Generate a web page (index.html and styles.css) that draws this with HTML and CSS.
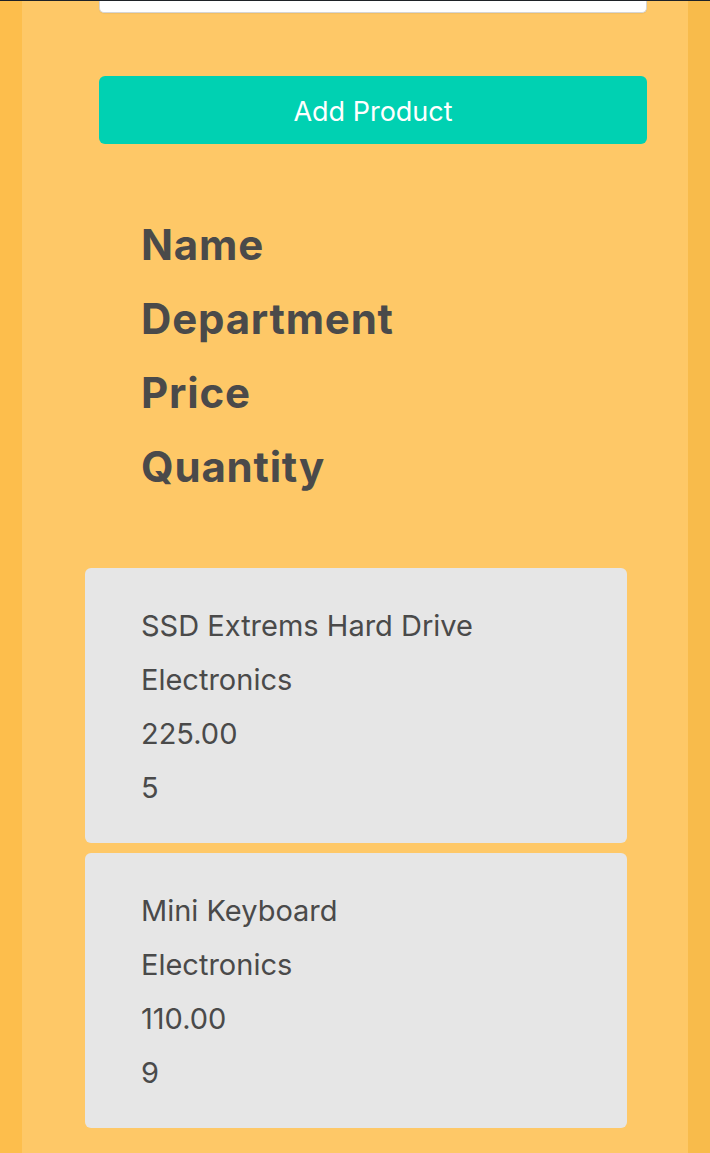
FILE: index.html
```html
<!DOCTYPE html>
<html>
<head>
<meta charset="utf-8">
<link rel="stylesheet" href="styles.css">
</head>
<body>
<div class="topbar"></div>
<div class="page">
  <main class="panel">
    <form class="form">
      <div class="input-tail"></div>
      <button type="button" class="btn-add">Add Product</button>
    </form>
    <section class="headings">
      <h2>Name</h2>
      <h2>Department</h2>
      <h2>Price</h2>
      <h2>Quantity</h2>
    </section>
    <section class="list">
      <article class="card">
        <p>SSD Extrems Hard Drive</p>
        <p>Electronics</p>
        <p>225.00</p>
        <p>5</p>
      </article>
      <article class="card">
        <p>Mini Keyboard</p>
        <p>Electronics</p>
        <p>110.00</p>
        <p>9</p>
      </article>
    </section>
  </main>
</div>
</body>
</html>
```

FILE: styles.css
```css
* { box-sizing: border-box; }
html, body { margin: 0; padding: 0; }
body {
  font-family: Inter, "Noto Sans", sans-serif;
  color: #4a4a4a;
  background: linear-gradient(to right, #fdbe4c 0, #fdbe4c 22px, #fec867 22px, #fec867 688px, #f8bb4b 688px);
  min-height: 1153px;
  overflow: hidden;
}
.topbar { height: 1px; background: #1e2227; }
.page { padding: 0 22px; }
.panel {
  background: #fec867;
  min-height: 1152px;
  display: flex;
  flex-direction: column;
}
.form {
  display: flex;
  flex-direction: column;
  padding: 0 41px 0 77px;
}
.input-tail {
  height: 12px;
  background: #fff;
  border: 1px solid #d5d5d5;
  border-top: none;
  border-radius: 0 0 5px 5px;
  box-shadow: 0 1px 1px rgba(0,0,0,0.05);
}
.btn-add {
  margin-top: 63px;
  height: 68px;
  border: none;
  border-radius: 6px;
  background: #00d1b2;
  color: #fff;
  font-family: inherit;
  font-size: 27px;
  padding: 3px 0 0 0;
}
.headings {
  padding: 64px 0 0 119px;
  display: flex;
  flex-direction: column;
}
.headings h2 {
  margin: 0;
  font-size: 42px;
  letter-spacing: 0.8px;
  font-weight: 700;
  line-height: 74px;
  height: 74px;
}
.list {
  margin-top: 64px;
  padding: 0 61px 0 63px;
  display: flex;
  flex-direction: column;
  gap: 10px;
}
.card {
  background: #e6e6e6;
  border-radius: 6px;
  height: 275px;
  padding: 31px 0 0 56px;
}
.card p {
  margin: 0;
  font-size: 29px;
  line-height: 54px;
}
```
